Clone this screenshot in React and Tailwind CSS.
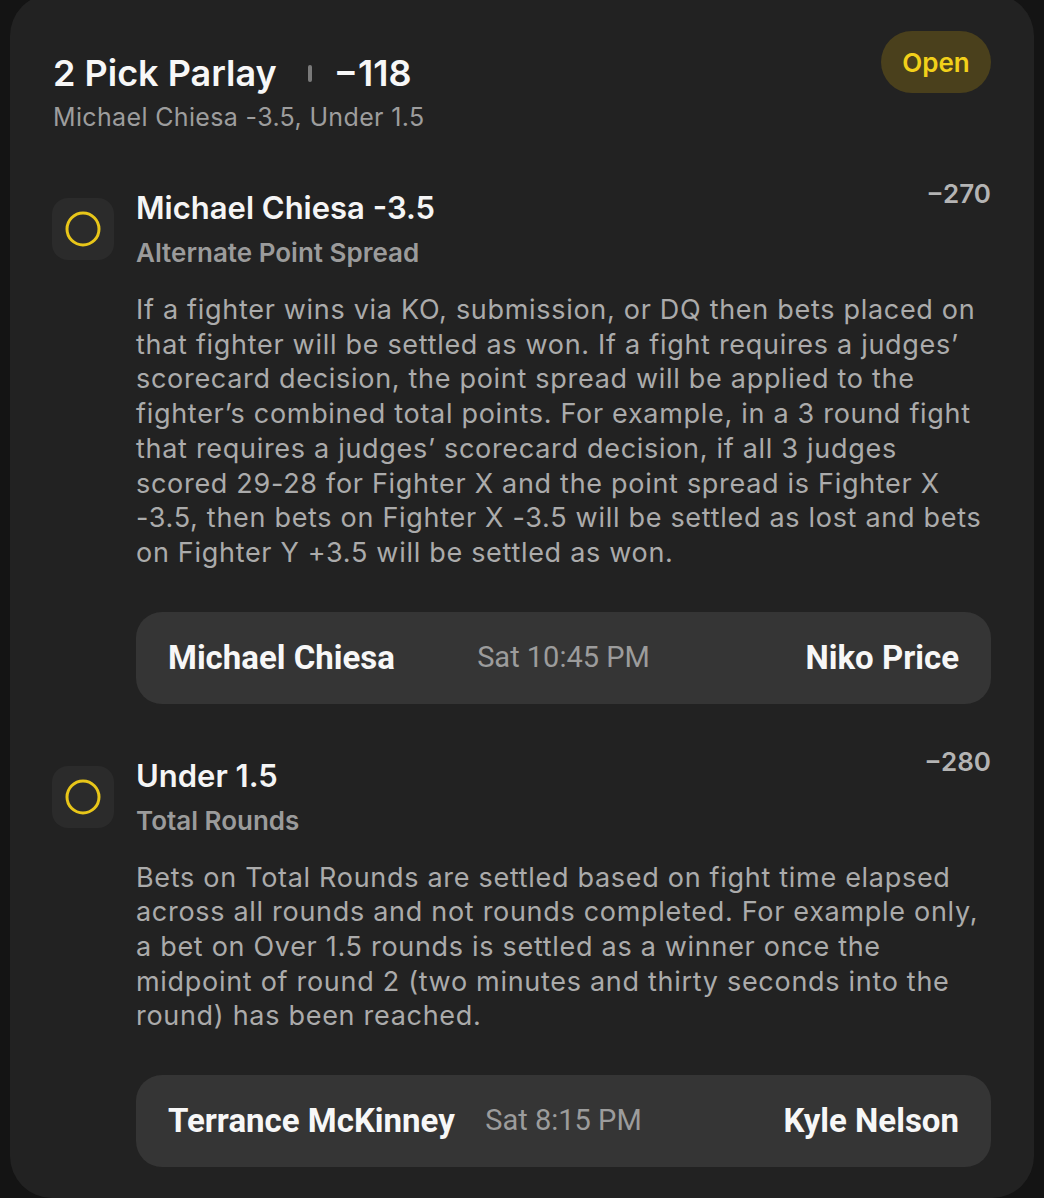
import React from "react";

const condensed = {
  fontFamily: 'Roboto, "Liberation Sans", sans-serif',
};

function Ring() {
  return (
    <div className="w-[62px] h-[62px] shrink-0 rounded-[16px] bg-[#2b2b2b] flex items-center justify-center">
      <svg width="36" height="36" viewBox="0 0 36 36">
        <circle cx="18" cy="18" r="16" fill="none" stroke="#e8c619" strokeWidth="3" />
      </svg>
    </div>
  );
}

function EventBox({ left, time, right }) {
  return (
    <div className="mt-[41px] h-[92px] rounded-[26px] bg-[#353535] px-[32px] grid grid-cols-[1fr_auto_1fr] items-center">
      <div className="text-[33px] font-bold text-[#f7f7f7] whitespace-nowrap" style={condensed}>{left}</div>
      <div className="text-[29px] text-[#9c9c9c] whitespace-nowrap px-2" style={condensed}>{time}</div>
      <div className="text-[33px] font-bold text-[#f7f7f7] text-right whitespace-nowrap" style={condensed}>{right}</div>
    </div>
  );
}

function Pick({ title, market, odds, body, ev, top }) {
  return (
    <div className={top}>
      <div className="flex items-center">
        <Ring />
        <div className="ml-[22px] flex-1">
          <div className="text-[31px] leading-[38px] font-semibold text-[#f5f5f5]">{title}</div>
          <div className="mt-[10px] text-[26px] leading-[32px] font-semibold text-[#9b9b9b]">{market}</div>
        </div>
        <div className="self-start -mt-[7px] text-[26px] leading-[24px] font-semibold text-[#b4b4b4]">{odds}</div>
      </div>
      <div className="ml-[84px]">
        <p className="mt-[24px] text-[27px] leading-[34.7px] tracking-[0.7px] text-[#ababab]">{body}</p>
        <EventBox {...ev} />
      </div>
    </div>
  );
}

export default function App() {
  return (
    <div className="min-h-[1200px] bg-[#141414] px-[10px] pt-0" style={{ fontFamily: 'Inter, "Noto Sans", sans-serif' }}>
      <div className="-mt-[6px] rounded-[42px] bg-[#222222] pl-[42px] pr-[43px] pt-[59px] pb-[31px]">
        <div className="flex items-start justify-between">
          <div className="pl-[1px]">
            <div className="flex items-center h-[40px]">
              <span className="text-[36px] leading-[40px] font-semibold text-[#f7f7f7]">2 Pick Parlay</span>
              <span className="ml-[31px] w-[4px] h-[17px] rounded-full bg-[#7a7a7a]"></span>
              <span className="ml-[22px] text-[36px] leading-[40px] font-semibold text-[#f7f7f7]">−118</span>
            </div>
            <div className="mt-[8px] text-[25px] leading-[32px] tracking-[0.35px] text-[#9d9d9d]">Michael Chiesa -3.5, Under 1.5</div>
          </div>
          <div className="-mt-[22px] h-[62px] w-[110px] rounded-full bg-[#4a401c] flex items-center justify-center text-[26px] font-semibold text-[#f2d01a]">
            Open
          </div>
        </div>

        <Pick
          top="mt-[56px]"
          title="Michael Chiesa -3.5"
          market="Alternate Point Spread"
          odds="−270"
          body="If a fighter wins via KO, submission, or DQ then bets placed on that fighter will be settled as won. If a fight requires a judges’ scorecard decision, the point spread will be applied to the fighter’s combined total points. For example, in a 3 round fight that requires a judges’ scorecard decision, if all 3 judges scored 29-28 for Fighter X and the point spread is Fighter X -3.5, then bets on Fighter X -3.5 will be settled as lost and bets on Fighter Y +3.5 will be settled as won."
          ev={{ left: "Michael Chiesa", time: "Sat 10:45 PM", right: "Niko Price" }}
        />

        <Pick
          top="mt-[53px]"
          title="Under 1.5"
          market="Total Rounds"
          odds="−280"
          body="Bets on Total Rounds are settled based on fight time elapsed across all rounds and not rounds completed. For example only, a bet on Over 1.5 rounds is settled as a winner once the midpoint of round 2 (two minutes and thirty seconds into the round) has been reached."
          ev={{ left: "Terrance McKinney", time: "Sat 8:15 PM", right: "Kyle Nelson" }}
        />
      </div>
    </div>
  );
}
